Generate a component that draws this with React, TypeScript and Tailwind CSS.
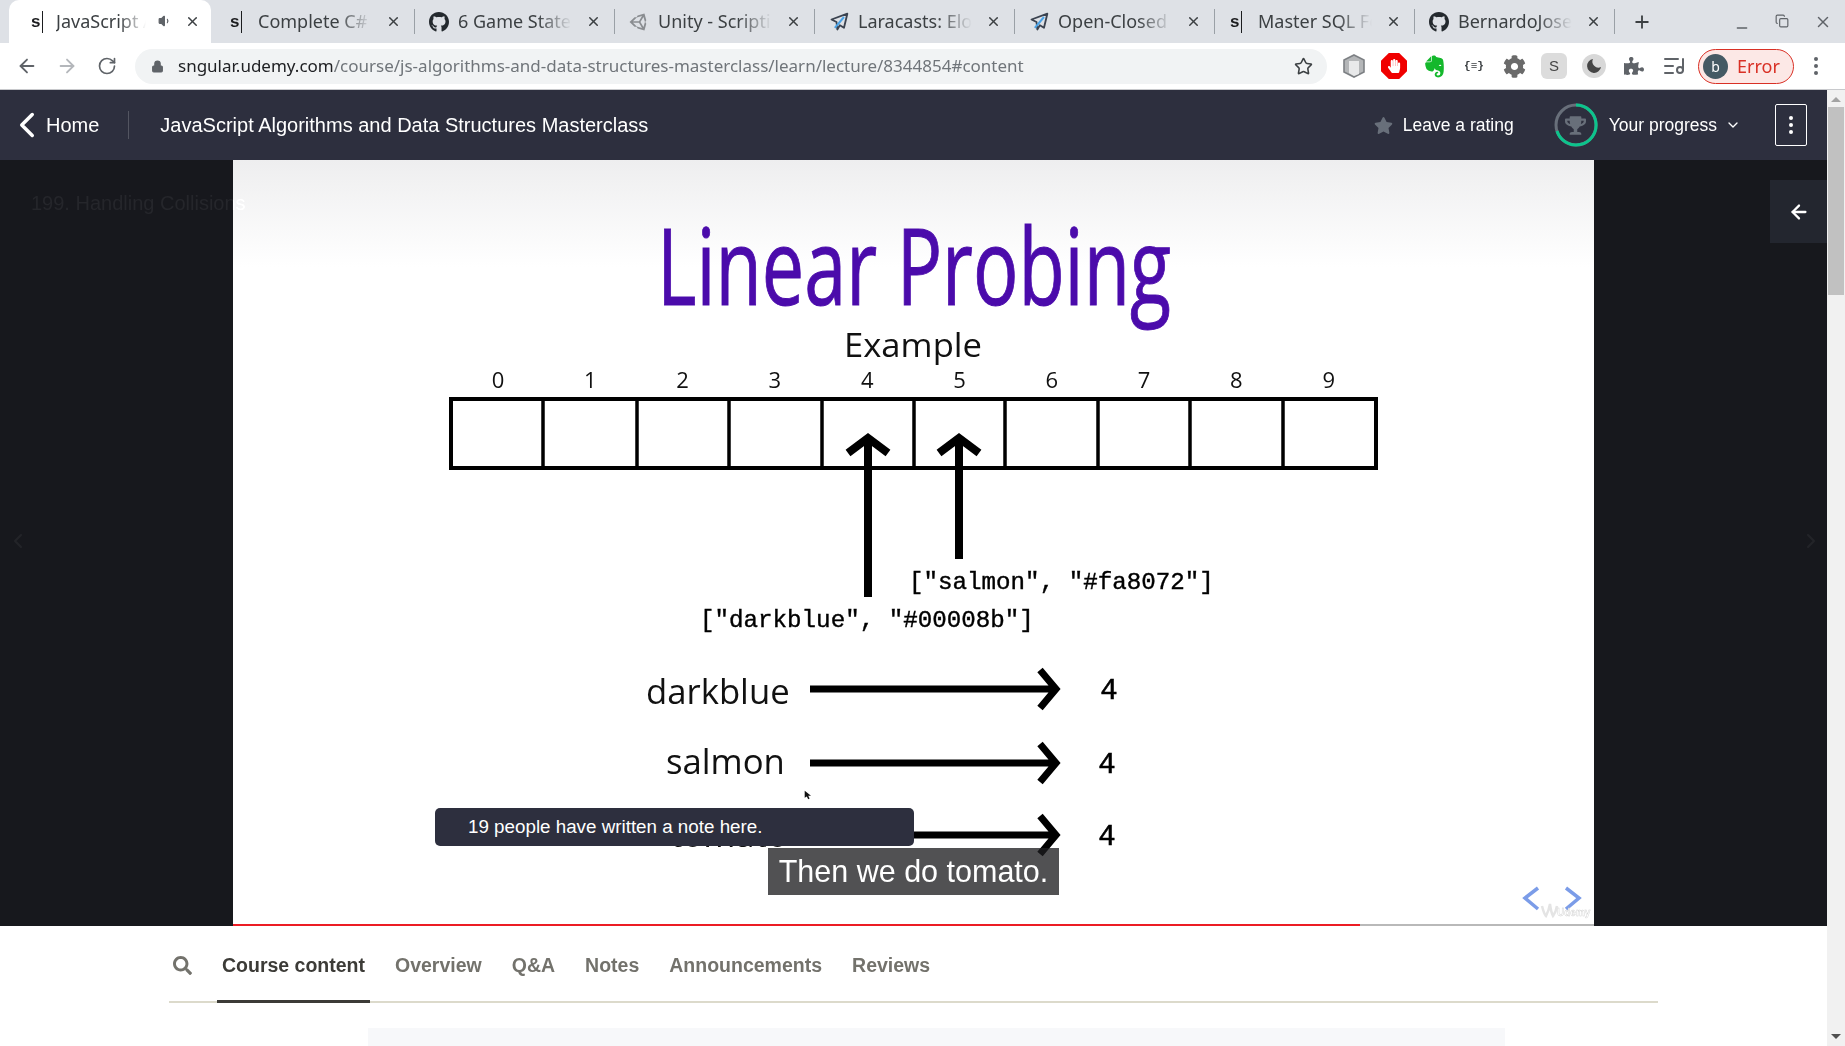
import { ArrowLeft, ArrowRight, ChevronDown, ChevronLeft, ChevronRight, Copy, ListMusic, Lock, Minus, Plus, RotateCw, Star, Volume1, X } from "lucide-react";
import { FaCog, FaEvernote, FaGithub, FaHandPaper, FaPuzzlePiece, FaSearch, FaStar, FaTrophy, FaUnity } from "react-icons/fa";

const uiFont = "font-['Noto_Sans','Open_Sans',sans-serif]";

function SFavicon() {
  return (
    <span className="flex items-center w-[18px] h-[24px] text-[#1c1d1f]">
      <span className="font-['Liberation_Sans',sans-serif] font-bold text-[17px] leading-none">s</span>
      <span className="ml-[2px] w-px h-[22px] bg-[#1c1d1f]" />
    </span>
  );
}

function PlaneFavicon() {
  return (
    <svg viewBox="0 0 24 24" className="w-[24px] h-[24px]">
      <path d="M22 2 3 9l6 3 1 9 3-5 5 3z" fill="none" stroke="#3b4350" strokeWidth="2.2" strokeLinejoin="round" />
      <path d="M18 6 7 19" stroke="#4aa3e8" strokeWidth="2.4" />
    </svg>
  );
}

const tabs = [
  { title: "JavaScript Algorithms", icon: <SFavicon />, active: true },
  { title: "Complete C# Unity", icon: <SFavicon /> },
  { title: "6 Game States in", icon: <FaGithub className="text-[22px] text-[#24292e]" /> },
  { title: "Unity - Scripting API", icon: <FaUnity className="text-[22px] text-[#8a8d91]" /> },
  { title: "Laracasts: Eloquent", icon: <PlaneFavicon /> },
  { title: "Open-Closed Vs", icon: <PlaneFavicon /> },
  { title: "Master SQL For Data", icon: <SFavicon /> },
  { title: "BernardoJoseph", icon: <FaGithub className="text-[22px] text-[#24292e]" /> },
];

function TabStrip() {
  return (
    <div className={`flex shrink-0 h-[43px] bg-[#dee1e6] pl-[14px] ${uiFont}`}>
      {tabs.map((tab, i) =>
        tab.active ? (
          <div key={i} className="relative flex items-center shrink-0 w-[202px] h-[43px] -ml-[5px] mr-[3px] pl-[21px] rounded-t-[10px] bg-white">
            <span className="flex justify-center w-[20px] shrink-0">{tab.icon}</span>
            <span className="ml-[6px] w-[90px] overflow-hidden whitespace-nowrap text-[18px] text-[#3c4043] [mask-image:linear-gradient(to_right,black_70%,transparent)]">
              {tab.title}
            </span>
            <Volume1 size={14} fill="#5f6368" className="absolute left-[149px] top-[14px] text-[#5f6368]" />
            <X size={15} strokeWidth={2.4} className="absolute left-[176px] top-[14px] text-[#3c4043]" />
          </div>
        ) : (
          <div key={i} className="relative flex items-center shrink-0 w-[200px] h-[43px] pl-[15px]">
            <span className="flex justify-center w-[20px] shrink-0">{tab.icon}</span>
            <span className="ml-[9px] w-[114px] overflow-hidden whitespace-nowrap text-[18px] text-[#3c4043] [mask-image:linear-gradient(to_right,black_70%,transparent)]">
              {tab.title}
            </span>
            <X size={15} strokeWidth={2.4} className="absolute left-[172px] top-[14px] text-[#3c4043]" />
            {i > 1 && <span className="absolute left-0 top-[9px] w-px h-[25px] bg-[#9aa0a6]" />}
          </div>
        ),
      )}
      <span className="mt-[9px] w-px h-[25px] bg-[#9aa0a6]" />
      <Plus size={20} strokeWidth={2.2} className="ml-[17px] mt-[12px] text-[#3c4043]" />
      <div className="ml-auto flex pr-[13px] pt-[13px] gap-[25px] text-[#5f6368]">
        <Minus size={16} className="mt-[7px]" />
        <Copy size={14} className="mt-[1px]" />
        <X size={18} />
      </div>
    </div>
  );
}

function ExtensionIcons() {
  return (
    <div className="flex items-center gap-[14px] ml-[14px]">
      <svg viewBox="0 0 26 26" className="w-[26px] h-[26px]">
        <path d="M13 2 23 7v12l-10 5-10-5V7z" fill="#b4b6b8" stroke="#7d8084" strokeWidth="1.6" />
        <path d="M8 8h10v13l-5 2-5-3z" fill="#e8e9ea" />
      </svg>
      <span className="flex w-[26px] h-[26px] items-center justify-center bg-[#f00000] text-white [clip-path:polygon(30%_0,70%_0,100%_30%,100%_70%,70%_100%,30%_100%,0_70%,0_30%)]">
        <FaHandPaper className="text-[14px]" />
      </span>
      <span className="flex w-[26px] justify-center"><FaEvernote className="text-[25px] text-[#14b82c]" /></span>
      <span className="w-[26px] text-center font-['Liberation_Mono',monospace] text-[11px] font-bold text-[#3c4043]">{"{≡}"}</span>
      <span className="flex w-[26px] justify-center"><FaCog className="text-[23px] text-[#6a6a6a]" /></span>
      <span className="flex w-[26px] h-[26px] items-center justify-center rounded-[6px] bg-[#dcdcdc] font-['Liberation_Sans',sans-serif] text-[15px] text-[#444]">S</span>
      <svg viewBox="0 0 26 26" className="w-[26px] h-[26px]">
        <circle cx="13" cy="13" r="12" fill="#d8d8d8" />
        <path d="M12 6a7 7 0 1 0 8 8 6 6 0 0 1-8-8z" fill="#444" />
      </svg>
      <span className="flex w-[26px] justify-center"><FaPuzzlePiece className="text-[20px] text-[#5f6368]" /></span>
      <ListMusic size={24} className="text-[#5f6368] mx-[1px]" />
    </div>
  );
}

function Toolbar() {
  return (
    <div className={`flex shrink-0 items-center h-[47px] bg-white border-b border-[#c8c9cc] ${uiFont}`}>
      <ArrowLeft size={22} className="ml-[16px] text-[#5f6368]" />
      <ArrowRight size={22} className="ml-[18px] text-[#b4b7bb]" />
      <RotateCw size={20} className="ml-[19px] text-[#5f6368]" />
      <div className="flex items-center ml-[18px] w-[1192px] h-[35px] rounded-full bg-[#f1f3f4] pl-[16px] pr-[14px]">
        <Lock size={13} fill="#5f6368" className="text-[#5f6368]" />
        <span className="ml-[14px] text-[17px] whitespace-nowrap text-[#70757a]">
          <span className="text-[#202124]">sngular.udemy.com</span>/course/js-algorithms-and-data-structures-masterclass/learn/lecture/8344854#content
        </span>
        <Star size={19} className="ml-auto text-[#3c4043]" />
      </div>
      <ExtensionIcons />
      <div className="flex items-center ml-[11px] w-[96px] h-[35px] rounded-full border border-[#d93025] bg-[#fce8e6] pl-[4px]">
        <span className="flex w-[25px] h-[25px] items-center justify-center rounded-full bg-[#455a64] text-[14px] text-white">b</span>
        <span className="ml-[9px] text-[18px] text-[#d93025]">Error</span>
      </div>
      <div className="ml-[20px] flex flex-col gap-[3px]">
        <span className="w-[4px] h-[4px] rounded-full bg-[#5f6368]" />
        <span className="w-[4px] h-[4px] rounded-full bg-[#5f6368]" />
        <span className="w-[4px] h-[4px] rounded-full bg-[#5f6368]" />
      </div>
    </div>
  );
}

function ProgressRing() {
  return (
    <div className="relative flex w-[44px] h-[44px] items-center justify-center">
      <svg viewBox="0 0 44 44" className="absolute inset-0 w-[44px] h-[44px]">
        <circle cx="22" cy="22" r="20" fill="none" stroke="#686f7a" strokeWidth="3" />
        <path d="M22 2A20 20 0 1 1 3 28" fill="none" stroke="#0cc48c" strokeWidth="3" />
      </svg>
      <FaTrophy className="text-[21px] text-[#686f7a]" />
    </div>
  );
}

function CourseHeader() {
  return (
    <header className="flex shrink-0 items-center h-[70px] bg-[#2d2f3e] text-white font-['Liberation_Sans',sans-serif]">
      <ChevronLeft size={42} strokeWidth={2} className="ml-[6px]" />
      <span className="-ml-[2px] text-[20px]">Home</span>
      <span className="ml-[29px] w-px h-[28px] bg-[#535561]" />
      <span className="ml-[31px] text-[20px]">JavaScript Algorithms and Data Structures Masterclass</span>
      <div className="ml-auto flex items-center">
        <FaStar className="text-[19px] text-[#686f7a]" />
        <span className="ml-[10px] text-[17.5px]">Leave a rating</span>
        <span className="ml-[40px]"><ProgressRing /></span>
        <span className="ml-[11px] text-[17.5px]">Your progress</span>
        <ChevronDown size={16} strokeWidth={2} className="ml-[8px]" />
        <div className="ml-[34px] mr-[20px] flex flex-col items-center justify-center gap-[3px] w-[32px] h-[42px] rounded-[2px] border border-white">
          <span className="w-[4px] h-[4px] rounded-full bg-white" />
          <span className="w-[4px] h-[4px] rounded-full bg-white" />
          <span className="w-[4px] h-[4px] rounded-full bg-white" />
        </div>
      </div>
    </header>
  );
}

const cellLines = [543, 637, 729, 822, 914, 1005, 1098, 1190, 1283];

function MapRow({ label, x, y, labelY, numX }: { label: string; x: number; y: number; labelY: number; numX: number }) {
  return (
    <g>
      <text x={x} y={labelY} fontFamily="'Open Sans', sans-serif" fontSize="34.7" fill="#111">{label}</text>
      <path d={`M810 ${y}H1056M1040 ${y - 19}L1056 ${y}L1040 ${y + 19}`} fill="none" stroke="#000" strokeWidth="7" />
      <text x={numX} y={y + 10} fontFamily="'Liberation Mono', monospace" fontSize="29" stroke="#000" strokeWidth="0.6" textAnchor="middle">4</text>
    </g>
  );
}

// the lecture slide is a picture in the video, drawn in page coordinates
function Slide() {
  return (
    <svg viewBox="233 160 1361 764" className="block w-[1361px] h-[764px]">
      <defs>
        <linearGradient id="slide-bg" x1="0" y1="0" x2="0" y2="1">
          <stop offset="0" stopColor="#eeeeef" />
          <stop offset="0.14" stopColor="#ffffff" />
        </linearGradient>
      </defs>
      <rect x="233" y="160" width="1361" height="764" fill="url(#slide-bg)" />
      <text x="657" y="305" fontFamily="'Open Sans', sans-serif" fontSize="106" fill="#4b0bab" stroke="#4b0bab" strokeWidth="1" textLength="514" lengthAdjust="spacingAndGlyphs">Linear Probing</text>
      <text x="844" y="357" fontFamily="'Open Sans', sans-serif" fontSize="33" fill="#111" textLength="138" lengthAdjust="spacingAndGlyphs">Example</text>
      {Array.from({ length: 10 }, (_, i) => (
        <text key={i} x={498 + 92.3 * i} y="388" fontFamily="'Open Sans', sans-serif" fontSize="22" fill="#111" textAnchor="middle">{i}</text>
      ))}
      <rect x="451" y="399" width="925" height="69" fill="none" stroke="#000" strokeWidth="4" />
      {cellLines.map((x) => (
        <path key={x} d={`M${x} 399V468`} stroke="#000" strokeWidth="3.5" />
      ))}
      <path d="M868 597V440M848 453L868 438L888 453" fill="none" stroke="#000" strokeWidth="8" />
      <path d="M959 559V440M939 453L959 438L979 453" fill="none" stroke="#000" strokeWidth="8" />
      <text x="909" y="589" fontFamily="'Liberation Mono', monospace" fontSize="24.2" stroke="#000" strokeWidth="0.4">["salmon", "#fa8072"]</text>
      <text x="700" y="627" fontFamily="'Liberation Mono', monospace" fontSize="24.2" stroke="#000" strokeWidth="0.4">["darkblue", "#00008b"]</text>
      <MapRow label="darkblue" x={646} y={689} labelY={704} numX={1109} />
      <MapRow label="salmon" x={666} y={763} labelY={774} numX={1107} />
      <MapRow label="tomato" x={670} y={835} labelY={847} numX={1107} />
      <path d="M1538 888 1525 898 1538 909M1566 888 1579 898 1566 909" fill="none" stroke="#7b9ce8" strokeWidth="3.5" />
      <text x="1557" y="916" fontFamily="'Liberation Sans', sans-serif" fontSize="10" fontWeight="bold" fill="#fff" stroke="#cfcfcf" strokeWidth="0.4">Udemy</text>
      <path d="M1542 906q2 8 4 10q3-6 4-12q1 8 3 12q3-4 4-10" fill="none" stroke="#e4e4e4" strokeWidth="2.5" />
    </svg>
  );
}

function Player() {
  return (
    <div className="relative flex shrink-0 h-[766px] bg-[#17181d] font-['Liberation_Sans',sans-serif]">
      <div className="w-[233px]" />
      <div className="w-[1361px]">
        <Slide />
        <div className="flex h-[2px] bg-[#b9b9b9]">
          <div className="w-[1127px] bg-[#ec1c24]" />
        </div>
      </div>
      <div className="flex-1" />

      <span className="absolute left-[31px] top-[28px] text-[20px] whitespace-nowrap text-[#0e0e0e] mix-blend-plus-lighter">199. Handling Collisions</span>
      <ChevronLeft size={24} className="absolute left-[6px] top-[369px] text-white/5" />
      <ChevronRight size={24} className="absolute right-[4px] top-[369px] text-white/5" />
      <div className="absolute right-0 top-[20px] flex w-[57px] h-[63px] items-center justify-center bg-[#23262f]">
        <ArrowLeft size={22} strokeWidth={2.5} className="text-white" />
      </div>

      <svg viewBox="0 0 10 12" className="absolute left-[804px] top-[630px] w-[7px] h-[10px]">
        <path d="M1 0v10l3-2 2 4 2-1-2-4h4z" fill="#111" />
      </svg>

      <div className="absolute left-[435px] top-[648px] flex items-center w-[479px] h-[38px] rounded-[5px] bg-[#2d2f3e] pl-[33px] text-[18.8px] text-white">
        19 people have written a note here.
      </div>
      <div className="absolute left-[768px] top-[688px] flex items-center justify-center w-[291px] h-[47px] bg-[#1c1d1f]/[0.77] text-[30.5px] whitespace-nowrap text-white">
        Then we do tomato.
      </div>
    </div>
  );
}

const sections = ["Q&A", "Notes", "Announcements", "Reviews"];

function CourseTabs() {
  return (
    <div className="flex-1 min-h-0 overflow-hidden bg-white font-['Liberation_Sans',sans-serif]">
      <div className="flex items-start ml-[169px] w-[1489px] h-[77px] border-b-2 border-[#dcdacb]">
        <FaSearch className="ml-[4px] mt-[30px] text-[19px] text-[#73726c]" />
        <div className="ml-[25px] h-[77px] px-[5px] pt-[25px] border-b-[3px] border-[#3c3b37] text-[19.5px] font-bold text-[#3c3b37]">
          Course content
        </div>
        <span className="ml-[25px] pt-[25px] text-[19.5px] font-bold text-[#73726c]">Overview</span>
        {sections.map((name) => (
          <span key={name} className="ml-[30px] pt-[25px] text-[19.5px] font-bold text-[#73726c]">
            {name}
          </span>
        ))}
      </div>
      <div className="mt-[25px] ml-[368px] w-[1137px] h-[20px] bg-[#f7f8fa]" />
    </div>
  );
}

function Scrollbar() {
  return (
    <div className="relative w-[18px] bg-[#f1f1f1]">
      <span className="absolute left-[4px] top-[7px] w-0 h-0 border-x-[5px] border-b-[5px] border-x-transparent border-b-[#a3a3a3]" />
      <div className="absolute inset-x-[1px] top-[17px] h-[188px] bg-[#c1c1c1]" />
      <span className="absolute left-[4px] bottom-[7px] w-0 h-0 border-x-[5px] border-t-[5px] border-x-transparent border-t-[#505050]" />
    </div>
  );
}

export default function App() {
  return (
    <div className="flex flex-col w-[1845px] h-[1046px] overflow-hidden bg-white">
      <TabStrip />
      <Toolbar />
      <div className="flex flex-1 min-h-0">
        <main className="flex flex-col w-[1827px]">
          <CourseHeader />
          <Player />
          <CourseTabs />
        </main>
        <Scrollbar />
      </div>
    </div>
  );
}
